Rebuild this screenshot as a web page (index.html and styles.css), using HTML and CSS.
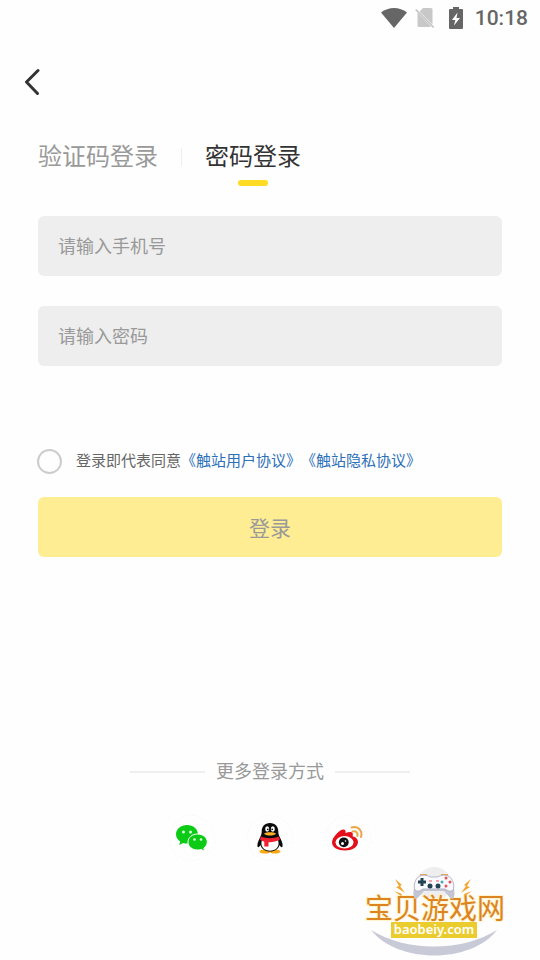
FILE: index.html
```html
<!DOCTYPE html>
<html lang="zh-CN">
<head>
    <meta charset="UTF-8">
    <meta name="viewport" content="width=device-width, initial-scale=1.0">
    <title>密码登录</title>
    <link rel="stylesheet" href="styles.css">
</head>
<body>

    <div class="login-page">
        <!-- 状态栏 -->
        <div class="status-bar">
            <svg class="wifi" width="26" height="20" viewBox="0 0 26 20">
                <path d="M0 4.500C7.500-1.500 18.500-1.500 26 4.500L13 20Z" fill="#666"/>
            </svg>
            <svg class="no-sim" width="20" height="20" viewBox="0 0 20 20">
                <path d="M8 0h8a1.500 1.500 0 0 1 1.500 1.500v15L4.500 3.500ZM2.500 4.500L16 18.500L15 19H4a1.500 1.500 0 0 1-1.500-1.500Z" fill="#c8c8c8"/>
                <path d="M.7 1.500L18.700 19.500" stroke="#c0c0c0" stroke-width="1.500"/>
            </svg>
            <svg class="battery" width="14" height="22" viewBox="0 0 14 22">
                <path d="M4 0h6v2h3a1 1 0 0 1 1 1v18a1 1 0 0 1-1 1H1a1 1 0 0 1-1-1V3a1 1 0 0 1 1-1h3Z" fill="#666"/>
                <path d="M8.500 5.500L3 13h3.300L5 18.500L11 11H7.500Z" fill="#fff"/>
            </svg>
            <span class="time">10:18</span>
        </div>

        <button class="back-button" type="button" aria-label="返回">
            <svg width="16" height="28" viewBox="0 0 16 28">
                <path d="M14 2.500L2.500 14L13.500 25.500" fill="none" stroke="#333" stroke-width="3" stroke-linecap="round" stroke-linejoin="round"/>
            </svg>
        </button>

        <form class="login-form">
            <!-- 登录方式切换 -->
            <div class="tabs">
                <button class="tab" type="button">验证码登录</button>
                <span class="tab-line"></span>
                <button class="tab active" type="button">密码登录</button>
            </div>

            <input class="field" type="tel" placeholder="请输入手机号" aria-label="手机号">
            <input class="field" type="password" placeholder="请输入密码" aria-label="密码">

            <div class="agreement">
                <input type="checkbox" id="agree">
                <p><label for="agree">登录即代表同意</label><a href="#">《触站用户协议》</a><a href="#">《触站隐私协议》</a></p>
            </div>

            <button class="login-button" type="button">登录</button>
        </form>

        <!-- 第三方登录 -->
        <div class="more-login">
            <div class="more-title">更多登录方式</div>
            <div class="social-list">
                <a href="#" aria-label="微信">
                    <svg width="32" height="28" viewBox="0 0 32 28">
                        <path d="M11 1C5 1 0 5 0 10.300c0 3 1.600 5.500 4.200 7.200L3.200 21l4-2c1.200.4 2.500.6 3.800.6c6.200 0 11-4.100 11-9.300S17.200 1 11 1Z" fill="#0ccb16"/>
                        <path d="M21.500 10c-5.300 0-9.500 3.500-9.500 8s4.200 8 9.500 8c1.300 0 2.500-.2 3.600-.6l3.600 2l-.9-3.300C29.900 22.600 31.300 20.500 31.300 18c0-4.500-4.400-8-9.800-8Z" fill="#0ccb16" stroke="#fff" stroke-width="1"/>
                        <g fill="#d8ffd8">
                            <circle cx="7.500" cy="8" r="1.500"/>
                            <circle cx="14.500" cy="8" r="1.500"/>
                            <circle cx="18.500" cy="15.500" r="1.300"/>
                            <circle cx="25" cy="15.500" r="1.300"/>
                        </g>
                    </svg>
                </a>
                <a href="#" aria-label="QQ">
                    <svg width="28" height="32" viewBox="0 0 28 32">
                        <ellipse cx="9" cy="29.500" rx="5.500" ry="2" fill="#fca815"/>
                        <ellipse cx="19" cy="29.500" rx="5.500" ry="2" fill="#fca815"/>
                        <path d="M14 1C8.500 1 5.700 5 5.700 9.500C5.700 12 5 13.500 3.800 16C2 19.500 1 22.500 1.500 24.500C2 26 3.500 25 4.500 23C5.500 27 9 29.500 14 29.500S22.500 27 23.500 23C24.500 25 26 26 26.500 24.500C27 22.500 26 19.500 24.200 16C23 13.500 22.300 12 22.300 9.500C22.300 5 19.500 1 14 1Z" fill="#0b0b0b"/>
                        <path d="M6.500 17h15c1 2 1.300 4 .9 6c-.8 3.500-4 5.700-8.400 5.700S6.400 26.500 5.600 23c-.4-2-.1-4 .9-6Z" fill="#fff"/>
                        <path d="M5 14.500c5.500 2.300 12.500 2.300 18 0l.8 3.300c-3.300 1.800-7.500 2.600-11.300 2.400V24.500H8.300V19.700C6.500 19.300 5.200 18.600 4 17.800Z" fill="#ee2233"/>
                        <ellipse cx="11.200" cy="7" rx="2" ry="2.700" fill="#fff"/>
                        <ellipse cx="16.800" cy="7" rx="2" ry="2.700" fill="#fff"/>
                        <circle cx="11.800" cy="7.300" r=".9" fill="#111"/>
                        <circle cx="16.200" cy="7.300" r=".9" fill="#111"/>
                        <path d="M8 11.500c3-1.700 9-1.700 12 0c-1.500 2.700-10.500 2.700-12 0Z" fill="#fdb022"/>
                    </svg>
                </a>
                <a href="#" aria-label="微博">
                    <svg width="32" height="28" viewBox="0 0 32 28">
                        <path d="M11.500 5.500c1.700 0 2.500 1.500 2 3.500c3-1.200 6-1.600 7 0c.6 1 .4 2.200 0 3.300c3.300.8 5.500 2.900 5.500 5.700c0 5-6 8.500-13 8.500S0 23.500 0 18.500C0 13.500 7.500 5.500 11.500 5.500Z" fill="#e3101b"/>
                        <ellipse cx="12.500" cy="18.300" rx="9" ry="6.200" fill="#fff"/>
                        <circle cx="11.800" cy="18.300" r="4.900" fill="#111"/>
                        <circle cx="10.500" cy="19.500" r="1.500" fill="#fff"/>
                        <circle cx="13.500" cy="17" r=".8" fill="#fff"/>
                        <g fill="none" stroke="#eba54b" stroke-width="2" stroke-linecap="round">
                            <path d="M19.500 3.500C25.500 1.500 31 6.500 29 13"/>
                            <path d="M20.500 7.500C24 6.500 26.300 9 25.300 12"/>
                        </g>
                    </svg>
                </a>
            </div>
        </div>

        <!-- 水印 -->
        <svg class="watermark" width="144" height="92" viewBox="0 0 144 92">
            <circle cx="70" cy="19" r="17" fill="#eee"/>
            <path d="M7 65C42 87 98 87 133 65C107 99 34 99 7 65Z" fill="#c9cad8"/>
            <text class="mark-name" x="71" y="54" text-anchor="middle">宝贝游戏网</text>
            <g fill="#f2a532">
                <path d="M31 14l7 6l-2 1l5 7l-9-6l3-1Z"/>
                <path d="M107 14l-7 6l2 1l-5 7l9-6l-3-1Z"/>
                <path d="M30 26l8 3l-1 2ZM108 26l-8 3l1 2Z"/>
            </g>
            <!-- 手柄 -->
            <path d="M56 10h7M77 10h7" stroke="#e9a65c" stroke-width="2"/>
            <path d="M51 17C50 25 48 29 51 34C54 34 56 30 60 26H80C84 30 86 34 89 34C92 29 90 25 89 17Z" fill="#c3c5d3"/>
            <path d="M56 11C60 9 64 11 67 12H73C76 11 80 9 84 11C89 13 91 21 89 25C87 27 84 26 81 24H59C56 26 53 27 51 25C49 21 51 13 56 11Z" fill="#fafafd" stroke="#b4b6c6" stroke-width="1"/>
            <path d="M58 13v8M54 17h8" stroke="#244454" stroke-width="3"/>
            <circle cx="66" cy="21" r="2.500" fill="#244454"/>
            <circle cx="74" cy="21" r="2.500" fill="#244454"/>
            <circle cx="82" cy="13" r="1.500" fill="#e85358"/>
            <circle cx="82" cy="21" r="1.500" fill="#e85358"/>
            <circle cx="78" cy="17" r="1.500" fill="#48a9b6"/>
            <circle cx="86" cy="17" r="1.500" fill="#e85358"/>
            <path d="M65 16h3M72 16h3" stroke="#e85358" stroke-width="1"/>
            <rect x="27" y="57" width="86" height="16" fill="#ebcc2f"/>
            <text class="mark-site" x="70" y="69" text-anchor="middle">baobeiy.com</text>
        </svg>
    </div>

</body>
</html>
```

FILE: styles.css
```css
* {
    box-sizing: border-box;
}

body {
    margin: 0;
    background-color: #fefefe;
    color: #333;
    font-family: Roboto, "Noto Sans CJK SC", sans-serif;
}

button,
input {
    font-family: inherit;
    border: none;
    margin: 0;
    padding: 0;
}

button {
    background: none;
    color: inherit;
    cursor: pointer;
}

svg {
    display: block;
}

.login-page {
    position: relative;
    min-height: 100vh;
    display: flex;
    flex-direction: column;
}

/* 状态栏 */
.status-bar {
    height: 36px;
    padding: 0 12px;
    display: flex;
    align-items: center;
    justify-content: flex-end;
}

.no-sim {
    margin-left: 8px;
}

.battery {
    margin-left: 14px;
}

.time {
    margin-left: 12px;
    font-size: 21px;
    font-weight: 500;
    line-height: 36px;
    color: #666;
}

.back-button {
    align-self: flex-start;
    margin-top: 24px;
    padding: 8px 24px;
}

/* 表单 */
.login-form {
    display: flex;
    flex-direction: column;
    padding: 0 38px;
    margin-top: 24px;
}

.tabs {
    display: flex;
    align-items: center;
    margin-bottom: 30px;
}

.tab {
    position: relative;
    height: 58px;
    font-size: 24px;
    line-height: 36px;
    color: #999;
}

.tab.active {
    color: #333;
}

.tab.active::after {
    content: "";
    position: absolute;
    left: 50%;
    bottom: 0;
    width: 30px;
    height: 6px;
    margin-left: -15px;
    border-radius: 3px;
    background-color: #ffdb23;
}

.tab-line {
    width: 1px;
    height: 18px;
    margin: 0 23px;
    background-color: #eee;
}

.field {
    width: 100%;
    height: 60px;
    margin-bottom: 30px;
    padding: 0 20px;
    border-radius: 6px;
    background-color: #eee;
    font-size: 18px;
    color: #333;
    outline: none;
}

.field::placeholder {
    color: #999;
}

.agreement {
    display: flex;
    align-items: center;
    gap: 14px;
    margin: 50px 0 21px -1px;
    font-size: 15px;
    line-height: 30px;
    color: #666;
    text-spacing-trim: space-all;
}

.agreement input {
    appearance: none;
    flex: none;
    width: 25px;
    height: 25px;
    border: 2px solid #ccc;
    border-radius: 50%;
}

.agreement input:checked {
    background-color: #ffdb23;
}

.agreement p {
    margin: 0;
}

.agreement a {
    color: #2c70b8;
    text-decoration: none;
}

.login-button {
    height: 60px;
    border-radius: 6px;
    background-color: #ffed94;
    font-size: 21px;
    color: #999;
}

/* 更多登录方式 */
.more-login {
    margin-top: auto;
    padding: 40px 0 99px;
}

.more-title {
    display: flex;
    align-items: center;
    justify-content: center;
    gap: 11px;
    font-size: 18px;
    line-height: 26px;
    color: #999;
}

.more-title::before,
.more-title::after {
    content: "";
    width: 75px;
    height: 2px;
    background-color: #eee;
}

.social-list {
    display: flex;
    justify-content: center;
    gap: 32px;
    margin-top: 30px;
}

.social-list a {
    display: flex;
    align-items: center;
    justify-content: center;
    width: 46px;
    height: 46px;
    border: 1px dashed #f8f8f8;
    border-radius: 50%;
}

/* 水印 */
.watermark {
    position: absolute;
    right: 32px;
    bottom: 3px;
}

.mark-name {
    font-size: 28px;
    fill: #dc8520;
    stroke: #fff3d0;
    stroke-width: 2px;
    paint-order: stroke;
}

.mark-site {
    font-family: "Noto Sans", sans-serif;
    font-size: 13px;
    font-weight: 600;
    fill: #fff;
}
```
